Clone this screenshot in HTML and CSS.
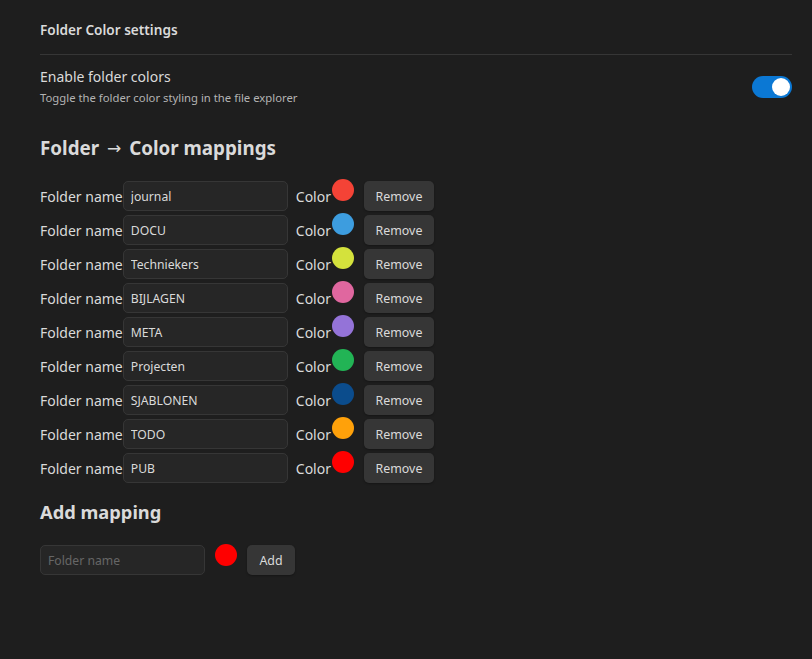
FILE: index.html
```html
<!DOCTYPE html>
<html lang="en">
<head>
<meta charset="utf-8">
<title>Folder Color settings</title>
<link rel="stylesheet" href="styles.css">
</head>
<body>
<div class="page">
  <div class="settings-heading">Folder Color settings</div>
  <div class="setting-item">
    <div class="setting-info">
      <div class="setting-name">Enable folder colors</div>
      <div class="setting-desc">Toggle the folder color styling in the file explorer</div>
    </div>
    <div class="toggle is-on"><span class="knob"></span></div>
  </div>

  <h3 class="section-title map-title">Folder <span class="arrow">→</span> Color mappings</h3>
  <div class="mappings">
    <div class="row"><label class="lbl">Folder name</label><input class="text-input" type="text" value="journal"><span class="lbl color-lbl">Color</span><span class="swatch" style="background:#f44336"></span><button class="btn">Remove</button></div>
    <div class="row"><label class="lbl">Folder name</label><input class="text-input" type="text" value="DOCU"><span class="lbl color-lbl">Color</span><span class="swatch" style="background:#3d9ddf"></span><button class="btn">Remove</button></div>
    <div class="row"><label class="lbl">Folder name</label><input class="text-input" type="text" value="Techniekers"><span class="lbl color-lbl">Color</span><span class="swatch" style="background:#d4e23c"></span><button class="btn">Remove</button></div>
    <div class="row"><label class="lbl">Folder name</label><input class="text-input" type="text" value="BIJLAGEN"><span class="lbl color-lbl">Color</span><span class="swatch" style="background:#e0679f"></span><button class="btn">Remove</button></div>
    <div class="row"><label class="lbl">Folder name</label><input class="text-input" type="text" value="META"><span class="lbl color-lbl">Color</span><span class="swatch" style="background:#9473d8"></span><button class="btn">Remove</button></div>
    <div class="row"><label class="lbl">Folder name</label><input class="text-input" type="text" value="Projecten"><span class="lbl color-lbl">Color</span><span class="swatch" style="background:#22b455"></span><button class="btn">Remove</button></div>
    <div class="row"><label class="lbl">Folder name</label><input class="text-input" type="text" value="SJABLONEN"><span class="lbl color-lbl">Color</span><span class="swatch" style="background:#0b4c8c"></span><button class="btn">Remove</button></div>
    <div class="row"><label class="lbl">Folder name</label><input class="text-input" type="text" value="TODO"><span class="lbl color-lbl">Color</span><span class="swatch" style="background:#ffa10a"></span><button class="btn">Remove</button></div>
    <div class="row"><label class="lbl">Folder name</label><input class="text-input" type="text" value="PUB"><span class="lbl color-lbl">Color</span><span class="swatch" style="background:#ff0000"></span><button class="btn">Remove</button></div>
  </div>

  <h3 class="section-title add-title">Add mapping</h3>
  <div class="add-row">
    <input class="text-input" type="text" placeholder="Folder name">
    <span class="swatch add-swatch" style="background:#ff0000"></span>
    <button class="btn">Add</button>
  </div>
</div>
</body>
</html>
```

FILE: styles.css
```css
html, body {
  margin: 0;
  padding: 0;
  background: #1e1e1e;
  height: 100%;
}
body {
  font-family: "Noto Sans", "Open Sans", sans-serif;
  color: #dadada;
}
.page {
  padding: 20px 20px 0 40px;
}
.settings-heading {
  font-size: 13.6px;
  font-weight: 600;
  line-height: 20px;
  padding-bottom: 14px;
  border-bottom: 1px solid #363636;
}
.setting-item {
  display: flex;
  align-items: center;
  justify-content: space-between;
  padding: 12px 0 12px 0;
}
.setting-name {
  font-size: 14px;
  line-height: 20px;
}
.setting-desc {
  font-size: 11.3px;
  line-height: 16px;
  margin-top: 3px;
  color: #b3b3b3;
}
.toggle {
  width: 40px;
  height: 22px;
  border-radius: 11px;
  background: #3a3a3a;
  display: flex;
  align-items: center;
  padding: 0 2px;
  box-sizing: border-box;
}
.toggle.is-on {
  background: #0b78d4;
  justify-content: flex-end;
}
.knob {
  width: 18px;
  height: 18px;
  border-radius: 50%;
  background: #ffffff;
}
.section-title {
  margin: 16px 0 19px 0;
  font-size: 18.3px;
  font-weight: 700;
  line-height: 28px;
  height: 28px;
}
.map-title {
  font-size: 18.8px;
}
.arrow {
  font-family: "DejaVu Sans", sans-serif;
  font-weight: 400;
  font-size: 17px;
  line-height: 10px;
  margin: 0 3px 0 3px;
  vertical-align: 1px;
}
.add-title {
  margin-top: 15px;
}
.mappings {
  display: flex;
  flex-direction: column;
  gap: 4px;
}
.row, .add-row {
  display: flex;
  align-items: center;
  height: 30px;
}
.lbl {
  font-size: 14px;
  line-height: 20px;
  color: #dadada;
  padding-top: 2px;
}
.color-lbl {
  margin-left: 8px;
  margin-right: 1px;
}
.text-input {
  box-sizing: border-box;
  width: 165px;
  height: 30px;
  padding: 0 7px;
  margin: 0;
  background: #262626;
  border: 1px solid #363636;
  border-radius: 5px;
  color: #dadada;
  font-family: "Noto Sans", "Open Sans", sans-serif;
  font-size: 12.2px;
  outline: none;
}
.text-input::placeholder {
  color: #666666;
}
.swatch {
  width: 22px;
  height: 22px;
  border-radius: 50%;
  align-self: flex-start;
  margin-top: -2px;
  flex: none;
}
.add-swatch {
  margin: -1px 0 0 10px;
}
.btn {
  margin-left: 10px;
  height: 30px;
  padding: 0 12px;
  min-width: 48px;
  background: #363636;
  border: none;
  border-radius: 5px;
  color: #dadada;
  font-family: "Noto Sans", "Open Sans", sans-serif;
  font-size: 12.4px;
  box-shadow: 0 1px 2px rgba(0,0,0,0.3);
}
.row .btn {
  width: 70px;
  padding: 0;
}
```
